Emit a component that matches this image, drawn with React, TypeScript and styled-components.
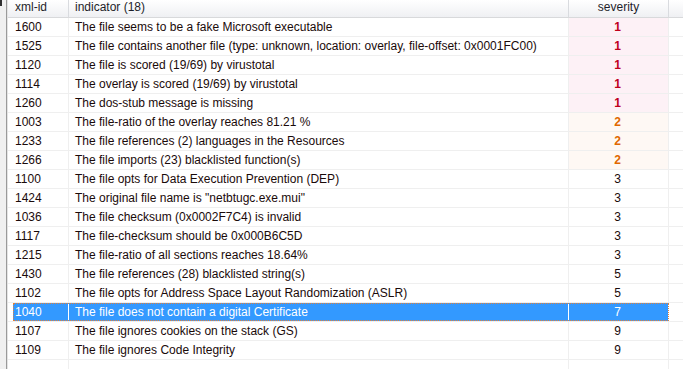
import React from "react";
import styled, { createGlobalStyle } from "styled-components";

const Global = createGlobalStyle`
  html, body { margin: 0; padding: 0; background: #fff; }
  body { font-family: "Segoe UI", "Liberation Sans", Arial, sans-serif; font-size: 12px; }
`;

type Item = { id: string; text: string; sev: number };

const items: Item[] = [
  { id: "1600", text: "The file seems to be a fake Microsoft executable", sev: 1 },
  { id: "1525", text: "The file contains another file (type: unknown, location: overlay, file-offset: 0x0001FC00)", sev: 1 },
  { id: "1120", text: "The file is scored (19/69) by virustotal", sev: 1 },
  { id: "1114", text: "The overlay is scored (19/69) by virustotal", sev: 1 },
  { id: "1260", text: "The dos-stub message is missing", sev: 1 },
  { id: "1003", text: "The file-ratio of the overlay reaches 81.21 %", sev: 2 },
  { id: "1233", text: "The file references (2) languages in the Resources", sev: 2 },
  { id: "1266", text: "The file imports (23) blacklisted function(s)", sev: 2 },
  { id: "1100", text: "The file opts for Data Execution Prevention (DEP)", sev: 3 },
  { id: "1424", text: "The original file name is \"netbtugc.exe.mui\"", sev: 3 },
  { id: "1036", text: "The file checksum (0x0002F7C4) is invalid", sev: 3 },
  { id: "1117", text: "The file-checksum should be 0x000B6C5D", sev: 3 },
  { id: "1215", text: "The file-ratio of all sections reaches 18.64%", sev: 3 },
  { id: "1430", text: "The file references (28) blacklisted string(s)", sev: 5 },
  { id: "1102", text: "The file opts for Address Space Layout Randomization (ASLR)", sev: 5 },
  { id: "1040", text: "The file does not contain a digital Certificate", sev: 7 },
  { id: "1107", text: "The file ignores cookies on the stack (GS)", sev: 9 },
  { id: "1109", text: "The file ignores Code Integrity", sev: 9 },
];

const SELECTED = "1040";
const COLS = "61px 500px 100px 1fr";

const Window = styled.div`
  display: flex;
  width: 683px;
  height: 369px;
  overflow: hidden;
  background: #fff;
  color: #1a0a0a;
`;

const Gutter = styled.div`
  width: 6px;
  flex: none;
  background: #f0f0f0;
  border-right: 1px solid #9a9a9a;
  position: relative;
`;

const GutterMark = styled.div`
  position: absolute;
  left: 0;
  top: 0;
  width: 2px;
  height: 6px;
  background: #303030;
`;

const Table = styled.div`
  flex: 1;
  display: flex;
  flex-direction: column;
  border-left: 1px solid #e4e4e4;
`;

const Header = styled.div`
  display: grid;
  grid-template-columns: ${COLS};
  height: 17px;
  border-bottom: 1px solid #d8d9db;
  background: linear-gradient(#ffffff, #eff0f3);
`;

const HeadCell = styled.div<{ $center?: boolean; $pad?: number }>`
  border-right: 1px solid #d9dbdf;
  padding-left: ${(p) => p.$pad ?? 6}px;
  line-height: 15px;
  color: #1e1e2a;
  text-align: ${(p) => (p.$center ? "center" : "left")};
  white-space: nowrap;
  overflow: hidden;
  &:last-child { border-right: none; }
`;

const Row = styled.div<{ $selected?: boolean }>`
  display: grid;
  grid-template-columns: ${COLS};
  height: 18px;
  border-bottom: 1px solid #efefef;
  position: relative;
  &::after {
    content: "";
    display: ${(p) => (p.$selected ? "block" : "none")};
    position: absolute;
    left: 5px;
    right: 14px;
    top: 0;
    bottom: 0;
    border: 1px dotted #e0803a;
    pointer-events: none;
  }
`;

const Cell = styled.div<{ $selected?: boolean; $bg?: string; $color?: string; $center?: boolean; $bold?: boolean }>`
  border-right: 1px solid ${(p) => (p.$selected ? "#ffffff" : "#efefef")};
  background: ${(p) => (p.$selected ? "#3399ff" : p.$bg ?? "transparent")};
  color: ${(p) => (p.$selected ? "#ffffff" : p.$color ?? "#1a0a0a")};
  font-weight: ${(p) => (p.$bold ? 700 : 400)};
  line-height: 19px;
  padding-left: 6px;
  text-align: ${(p) => (p.$center ? "center" : "left")};
  white-space: nowrap;
  overflow: hidden;
`;

const IdCell = styled(Cell)`
  margin-left: 5px;
  padding-left: 2px;
`;

const SevCell = styled(Cell)`
  padding-left: 0;
  padding-right: 2px;
`;

const EndCell = styled.div`
  background: #fff;
`;

const Filler = styled.div`
  flex: 1;
  display: grid;
  grid-template-columns: ${COLS};
`;

const FillCell = styled.div`
  border-right: 1px solid #efefef;
  &:last-child { border-right: none; }
`;

const sevStyle = (sev: number): { bg?: string; color?: string; bold?: boolean } => {
  if (sev === 1) return { bg: "#fdf1f6", color: "#c0001c", bold: true };
  if (sev === 2) return { bg: "#fef8f4", color: "#e06800", bold: true };
  return {};
};

export default function App() {
  return (
    <>
      <Global />
      <Window>
        <Gutter>
          <GutterMark />
        </Gutter>
        <Table>
          <Header>
            <HeadCell $pad={7}>xml-id</HeadCell>
            <HeadCell>indicator (18)</HeadCell>
            <HeadCell $center $pad={0}>severity</HeadCell>
            <HeadCell />
          </Header>
          {items.map((it) => {
            const sel = it.id === SELECTED;
            const s = sevStyle(it.sev);
            return (
              <Row key={it.id} $selected={sel}>
                <IdCell $selected={sel}>{it.id}</IdCell>
                <Cell $selected={sel}>{it.text}</Cell>
                <SevCell $selected={sel} $bg={s.bg} $color={s.color} $bold={s.bold} $center>
                  {it.sev}
                </SevCell>
                <EndCell />
              </Row>
            );
          })}
          <Filler>
            <FillCell />
            <FillCell />
            <FillCell />
            <FillCell />
          </Filler>
        </Table>
      </Window>
    </>
  );
}
